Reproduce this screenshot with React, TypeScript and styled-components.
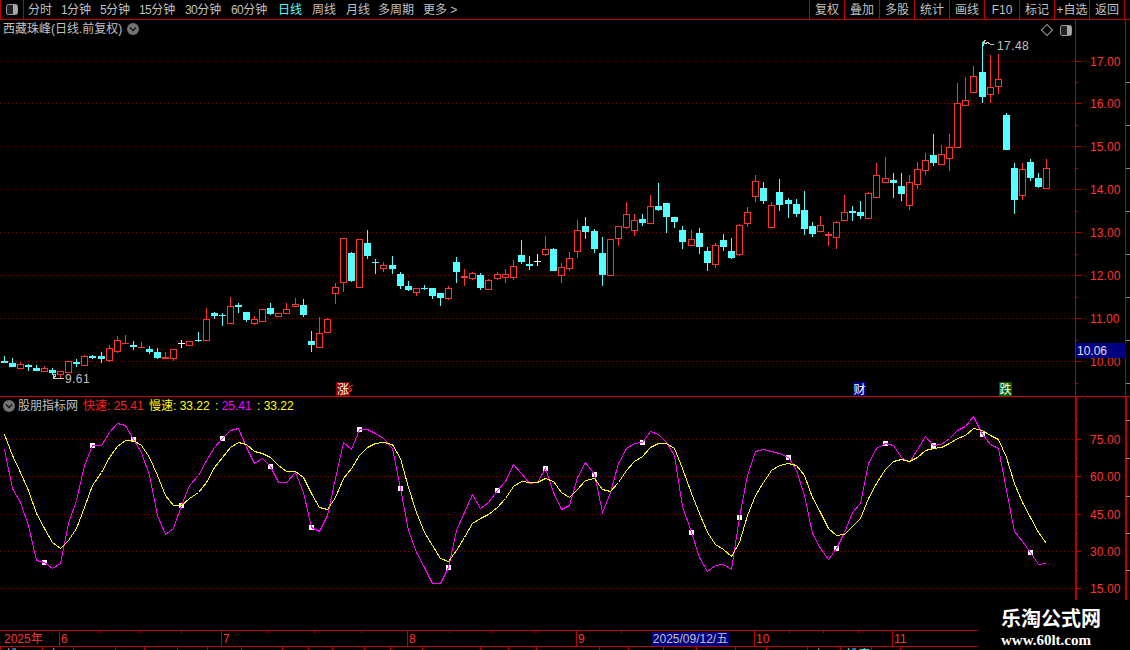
import React from 'react';
import styled, { createGlobalStyle } from 'styled-components';

const RED_LINE = '#c00000';
const RED_TEXT = '#ff3232';
const GRID = '#800000';
const CYAN = '#54ffff';
const GRAY = '#c0c0c0';
const FONT = '"Liberation Sans", "Noto Sans CJK SC", sans-serif';

const GlobalStyle = createGlobalStyle`
  html, body { margin: 0; padding: 0; background: #000; overflow: hidden; }
  #root { width: 1130px; height: 650px; }
`;

const Page = styled.div`
  position: relative;
  display: flex;
  flex-direction: column;
  width: 1130px;
  height: 650px;
  overflow: hidden;
  background: #000;
  color: ${GRAY};
  font: 12px/1 ${FONT};
`;

const Toolbar = styled.div`
  display: flex;
  align-items: stretch;
  flex: 0 0 20px;
  box-sizing: border-box;
  border-bottom: 1px solid ${RED_LINE};
`;

const ToggleCell = styled.div`
  flex: 0 0 24px;
  box-sizing: border-box;
  display: flex;
  align-items: center;
  justify-content: center;
  padding-right: 1px;
  border-left: 1px solid ${RED_LINE};
  border-right: 1px solid ${RED_LINE};
`;

const Tabs = styled.div`
  display: flex;
  align-items: center;
  padding-left: 4px;
`;

const Tab = styled.div<{ $w: number; $active?: boolean }>`
  width: ${(p) => p.$w}px;
  white-space: nowrap;
  color: ${(p) => (p.$active ? CYAN : GRAY)};
`;

const Num = styled.span`
  letter-spacing: -0.6px;
`;

const Tools = styled.div`
  display: flex;
  margin-left: auto;
  margin-right: 5px;
  border-left: 1px solid ${RED_LINE};
`;

const ToolButton = styled.div`
  width: 35px;
  box-sizing: border-box;
  display: flex;
  align-items: center;
  justify-content: center;
  white-space: nowrap;
  border-right: 1px solid ${RED_LINE};
`;

const Pane = styled.div<{ $h: number; $divider?: boolean }>`
  display: flex;
  flex: 0 0 ${(p) => p.$h}px;
  box-sizing: border-box;
  border-bottom: ${(p) => (p.$divider ? `1px solid #d00000` : 'none')};
`;

const Plot = styled.div`
  position: relative;
  flex: 0 0 1075px;
  svg { display: block; }
`;

const Axis = styled.div`
  flex: 0 0 55px;
  svg { display: block; }
`;

const PaneHeader = styled.div`
  position: absolute;
  top: 2px;
  left: 3px;
  display: flex;
  align-items: center;
  white-space: nowrap;
  height: 14px;
`;

const Title = styled.span`
  margin-right: 5px;
`;

const IndicatorTitle = styled.span`
  margin-left: 3px;
  margin-right: 5px;
`;

const Reading = styled.span<{ $color: string; $w: number }>`
  color: ${(p) => p.$color};
  width: ${(p) => p.$w}px;
`;

const Colon = styled.span`
  color: #ffff00;
`;

const PaneTools = styled.div`
  position: absolute;
  top: 4px;
  right: 3px;
  display: flex;
  align-items: center;
  gap: 7px;
`;

const TimeAxis = styled.div`
  display: flex;
  flex: 0 0 17px;
  box-sizing: border-box;
  position: relative;
  border-top: 1px solid ${RED_LINE};
  border-bottom: 1px solid ${RED_LINE};
  color: ${RED_TEXT};
`;

const TimeCell = styled.div<{ $w: number; $first?: boolean }>`
  flex: 0 0 ${(p) => p.$w}px;
  box-sizing: border-box;
  padding: 2px 0 0 ${(p) => (p.$first ? 4 : 1)}px;
  border-left: ${(p) => (p.$first ? 'none' : `1px solid ${RED_LINE}`)};
  white-space: nowrap;
`;

const TimeTicks = styled.svg`
  position: absolute;
  top: 0;
  left: 0;
`;

const DateChip = styled.div`
  position: absolute;
  top: 1px;
  left: 652px;
  width: 77px;
  height: 14px;
  background: #000080;
  color: ${GRAY};
  line-height: 14px;
  text-align: center;
  white-space: nowrap;
`;

const Status = styled.div`
  display: flex;
  flex: 0 0 3px;
  overflow: hidden;
  border-left: 1px solid ${RED_LINE};
`;

const StatusCell = styled.div<{ $w: number; $color?: string }>`
  flex: 0 0 ${(p) => p.$w}px;
  box-sizing: border-box;
  height: 16px;
  padding: 2px 0 0 5px;
  border-right: 1px solid ${RED_LINE};
  color: ${(p) => p.$color ?? GRAY};
  white-space: nowrap;
`;

const Watermark = styled.div`
  position: absolute;
  right: 0;
  bottom: 0;
  width: 152px;
  height: 50px;
  background: #000;
  box-sizing: border-box;
  padding: 7px 0 0 23px;
  color: #fff;
`;

const WatermarkName = styled.div`
  font: 700 20px/22px "Noto Sans CJK SC", sans-serif;
  white-space: nowrap;
`;

const WatermarkUrl = styled.div`
  margin-top: 4px;
  font: 700 15px/15px "Liberation Serif", serif;
  white-space: nowrap;
`;

/* ---------- data, in pixel rows of the picture ---------- */

type Kind = 'c' | 'r' | 'f' | 'w';
type Candle = [Kind, number, number, number, number];

const candles: Candle[] = [
  ['c',356,361,363,363],['c',358,363,367,367],['r',362,364,368,369],['c',364,365,367,371],['c',365,368,371,371],
  ['r',366,368,371,372],['c',368,370,373,375],['r',371,371,374,378],['r',361,361,372,372],['c',359,362,364,367],
  ['r',355,356,365,365],['c',355,356,358,359],['c',352,356,359,363],['r',345,348,360,362],['r',336,340,351,353],
  ['f',335,343,344,344],['c',341,345,347,350],['f',342,347,348,348],['c',346,349,352,354],['c',348,352,358,359],
  ['f',352,357,359,359],['r',349,349,358,361],['w',340,343,344,348],['r',341,341,345,346],['c',332,340,341,342],
  ['r',308,319,340,340],['c',312,313,316,319],['c',313,315,316,326],['r',297,306,323,323],['c',303,305,307,313],
  ['c',312,312,320,322],['r',316,319,323,325],['r',309,309,321,321],['c',303,308,314,315],['r',313,313,316,316],
  ['r',303,309,313,313],['r',298,304,306,306],['c',299,305,315,317],['c',331,341,345,352],['r',317,333,347,347],
  ['r',318,319,332,332],['r',283,287,293,304],['r',238,238,282,292],['c',252,253,281,282],['r',239,239,287,287],
  ['c',230,243,256,259],['c',259,262,263,274],['r',262,265,268,272],['c',256,265,269,274],['c',272,274,286,289],
  ['c',281,286,290,291],['r',288,288,292,296],['c',285,288,289,290],['c',288,288,296,299],['c',293,293,298,306],
  ['r',286,288,298,300],['c',257,262,272,283],['f',269,276,278,286],['r',272,273,278,280],['c',273,275,288,290],
  ['r',279,280,289,290],['r',272,274,278,280],['r',269,274,277,283],['r',260,266,277,280],['c',240,255,262,264],
  ['c',256,264,266,270],['w',254,261,262,266],['r',236,249,254,256],['c',248,249,271,271],['r',263,267,275,283],
  ['r',252,258,268,271],['r',220,230,251,258],['c',217,226,232,239],['c',229,231,249,253],['c',237,253,275,286],
  ['r',239,239,275,276],['r',226,226,238,246],['r',202,214,227,229],['r',214,220,230,236],['c',214,219,223,226],
  ['r',195,206,223,224],['c',183,206,210,211],['c',203,203,217,233],['c',217,217,222,228],['c',226,230,242,249],
  ['r',230,239,245,245],['c',228,233,247,254],['c',247,251,263,271],['r',243,245,264,268],['c',234,240,247,251],
  ['c',238,251,258,259],['r',224,225,254,256],['r',207,212,223,227],['r',175,181,196,202],['c',182,188,201,204],
  ['r',202,205,227,227],['c',179,192,205,211],['c',198,200,204,218],['c',199,204,214,217],['c',191,210,229,235],
  ['c',222,226,234,237],['r',216,225,231,232],['f',232,234,236,246],['r',221,222,237,249],['r',195,212,220,220],
  ['c',206,211,213,221],['c',201,212,216,219],['r',192,193,218,218],['r',163,175,197,198],['r',157,178,182,182],
  ['c',173,180,183,198],['c',173,186,194,201],['r',175,182,205,210],['r',162,169,184,189],['r',153,160,170,175],
  ['c',134,155,163,166],['r',145,154,164,165],['r',134,147,158,171],['r',83,103,147,147],['r',77,100,105,105],
  ['r',66,76,92,93],['c',42,72,97,103],['r',55,87,94,103],['r',54,79,86,94],['c',113,115,150,150],
  ['c',163,168,200,214],['r',163,169,195,200],['c',159,162,178,181],['c',173,178,187,188],['r',159,168,188,189],
];

const magenta = [
  449,488,502,525,560,562,568,563,523,500,465,445,445,432,423,425,439,452,475,515,534,528,505,485,475,460,447,438,430,428,
  447,463,458,466,482,482,472,492,527,531,515,478,442,449,429,429,433,438,448,488,530,552,567,583,583,567,530,512,494,508,
  502,490,481,464,473,483,482,468,492,509,505,477,462,474,512,492,463,448,443,442,431,434,442,455,506,532,557,571,565,564,
  569,517,475,451,449,451,453,457,470,495,533,548,559,548,532,512,503,463,448,443,445,457,462,449,436,445,444,438,430,426,
  416,434,444,448,490,531,541,552,564,563,
];

const yellow = [
  434,455,472,490,513,528,542,548,540,528,507,485,472,457,446,440,440,445,457,475,495,505,505,498,492,482,467,457,447,442,
  444,451,453,457,465,471,471,477,493,507,509,497,478,468,455,447,443,442,444,458,487,512,532,545,558,561,550,537,523,518,
  514,507,498,486,481,482,482,478,481,492,497,489,480,478,489,491,482,470,461,456,447,443,443,448,468,493,513,532,544,549,
  556,542,515,495,482,470,465,463,465,475,497,512,528,535,534,526,518,498,483,469,461,459,461,457,450,448,447,443,438,435,
  428,430,435,439,457,483,502,517,532,543,
];

const marks = [5,11,16,22,27,33,38,44,49,55,61,67,73,79,85,91,97,103,109,115,121,127];
const jumps = [12,24,36,48,61,73,85,97,109,121];
const colX = (i: number) => 4 + 8 * i + jumps.filter((j) => j <= i).length;

const priceGrid = [61,103,146,189,232,275,318,361];
const priceLabels: [string, number][] = [['17.00',61],['16.00',103],['15.00',146],['14.00',189],['13.00',232],['12.00',275],['11.00',318],['10.00',361]];
const priceMinor = [82,125,168,211,254,297,340,383];
const rateGrid = [439,476,514,551,588];
const rateLabels: [string, number][] = [['75.00',439],['60.00',476],['45.00',514],['30.00',551],['15.00',588]];
const rateMinor = [420,458,496,533,570];

const tabs: [string | null, string, number, boolean?][] = [
  [null,'分时',33],['1','分钟',39],['5','分钟',39],['15','分钟',46],['30','分钟',46],['60','分钟',47],
  [null,'日线',34,true],[null,'周线',34],[null,'月线',32],[null,'多周期',45],[null,'更多 >',40],
];
const tools = ['复权','叠加','多股','统计','画线','F10','标记','+自选','返回'];
const months: [string, number, boolean?][] = [['2025年',59,true],['6',162],['7',186],['8',169],['9',178],['10',138],['11',238]];
const timeTicks = [100,140,181,268,314,361,449,492,534,621,789,823,858];
const statusCells: [string, number, string?][] = [
  ['排',42],['上',31],['',42],['',29],['',33],['',30],['',34],['',41],['',26],['',24],['',32],['',26],['',32],['',58],['',28],['',28],
  ['',63],['',29],['',35],['',33],['',39],['',31],['',41],['上',33],['排序',31,CYAN],['',29],
];

/* ---------- drawings ---------- */

const PanelGlyph = () => (
  <svg width="12" height="11" viewBox="0 0 12 11">
    <rect x="0.5" y="0.5" width="11" height="10" rx="2" fill="#222" stroke="#9a9a9a" />
    <rect x="7" y="1" width="4" height="9" fill="#a8a8a8" />
  </svg>
);

const ChevronDisc = () => (
  <svg width="12" height="12" viewBox="0 0 12 12">
    <circle cx="6" cy="6" r="6" fill="#737373" />
    <path d="M3 4.5 L6 7.5 L9 4.5" fill="none" stroke="#161616" strokeWidth="1.4" />
  </svg>
);

const Diamond = () => (
  <svg width="12" height="12" viewBox="0 0 12 12" shapeRendering="crispEdges">
    <path d="M6 .5 L11.5 6 L6 11.5 L.5 6 Z" fill="none" stroke="#6e6e6e" />
  </svg>
);

const CandleMark = ({ c, i }: { c: Candle; i: number }) => {
  const [kind, high, top, bottom, low] = c;
  const x = colX(i);
  const color = kind === 'c' ? CYAN : kind === 'w' ? '#ffffff' : '#ff3232';
  const wick = (
    <>
      {top > high && <rect x={x} y={high} width="1" height={top - high} fill={color} />}
      {low > bottom && <rect x={x} y={bottom} width="1" height={low - bottom} fill={color} />}
    </>
  );
  if (kind === 'r') {
    return (
      <g>
        {wick}
        <rect x={x - 3 + 0.5} y={top + 0.5} width="6" height={bottom - top} fill="#000" stroke={color} />
      </g>
    );
  }
  return (
    <g>
      {wick}
      <rect x={x - 3} y={top} width="7" height={Math.max(1, bottom - top)} fill={color} />
    </g>
  );
};

const Grid = ({ rows }: { rows: number[] }) => (
  <g>
    {rows.map((y) => (
      <line key={y} x1="0" x2="1075" y1={y + 0.5} y2={y + 0.5} stroke={GRID} strokeDasharray="1 3" />
    ))}
  </g>
);

const PriceChart = () => (
  <svg width="1075" height="376" viewBox="0 20 1075 376" shapeRendering="crispEdges">
    <Grid rows={priceGrid} />
    {candles.map((c, i) => (
      <CandleMark key={i} c={c} i={i} />
    ))}
    <path d="M994 44 L990 44 L988 42.5 L985 43.5 L983 41.5 M983 41.5 L986 40.5 M983 41.5 L983 46" fill="none" stroke="#c8c8c8" />
    <text x="997" y="50" fill={GRAY} fontSize="12" letterSpacing="0.4" fontFamily={FONT} shapeRendering="auto">17.48</text>
    <path d="M64 378.5 L53 378.5 M53 378.5 L56 375.5 M53 378.5 L53 374 M53 374 L56 374" fill="none" stroke="#c8c8c8" />
    <text x="65" y="383" fill={GRAY} fontSize="12" letterSpacing="0.4" fontFamily={FONT}>9.61</text>
    <rect x="336" y="382" width="14" height="14" fill="#8a0000" />
    <text x="343" y="394" fill="#fff" fontSize="12" textAnchor="middle" fontFamily={FONT}>涨</text>
    <path d="M353 385 L349 387 L352 390 L348 393" fill="none" stroke="#ff2020" />
    <rect x="853" y="382" width="13" height="14" fill="#000090" />
    <text x="859.5" y="394" fill="#fff" fontSize="12" textAnchor="middle" fontFamily={FONT}>财</text>
    <rect x="999" y="382" width="13" height="14" fill="#006000" />
    <text x="1005.5" y="394" fill="#fff" fontSize="12" textAnchor="middle" fontFamily={FONT}>跌</text>
  </svg>
);

const seriesPoints = (values: number[]) => values.map((y, i) => `${colX(i) + 0.5},${y + 0.5}`).join(' ');

const RateChart = () => (
  <svg width="1075" height="233" viewBox="0 397 1075 233" shapeRendering="crispEdges">
    <Grid rows={rateGrid} />
    {marks.map((i) => (
      <rect key={i} x={colX(i) - 2} y={magenta[i] - 2} width="5" height="5" fill="#fff" />
    ))}
    <polyline points={seriesPoints(magenta)} fill="none" stroke="#ff00ff" />
    <polyline points={seriesPoints(yellow)} fill="none" stroke="#ffff00" />
  </svg>
);

const AxisScale = ({
  top,
  height,
  labels,
  minor,
  width,
  children,
}: {
  top: number;
  height: number;
  labels: [string, number][];
  minor: number[];
  width: number;
  children?: React.ReactNode;
}) => (
  <svg width="55" height={height} viewBox={`1075 ${top} 55 ${height}`} shapeRendering="crispEdges">
    <rect x="1075" y={top} width={width} height={height} fill={RED_LINE} />
    <rect x="1125" y={top} width={width} height={Math.min(height, 600 - top)} fill={RED_LINE} />
    {labels.map(([t, y]) => (
      <g key={t}>
        <rect x="1075" y={y} width="6" height="1" fill={RED_LINE} />
        <text x="1090" y={y + 5} fill={RED_TEXT} fontSize="12" fontFamily={FONT} letterSpacing="0.1">{t}</text>
      </g>
    ))}
    {minor.map((y) => (
      <g key={y}>
        <rect x="1075" y={y} width="3" height="1" fill={RED_LINE} />
        <rect x="1126" y={y} width="4" height="1" fill="#8a8a8a" />
      </g>
    ))}
    {children}
  </svg>
);

export default function App() {
  return (
    <Page>
      <GlobalStyle />
      <Toolbar>
        <ToggleCell>
          <PanelGlyph />
        </ToggleCell>
        <Tabs>
          {tabs.map(([n, t, w, active]) => (
            <Tab key={`${n}${t}`} $w={w} $active={active}>
              {n && <Num>{n}</Num>}
              {t}
            </Tab>
          ))}
        </Tabs>
        <Tools>
          {tools.map((t) => (
            <ToolButton key={t}>{t}</ToolButton>
          ))}
        </Tools>
      </Toolbar>

      <Pane $h={377} $divider>
        <Plot>
          <PriceChart />
          <PaneHeader>
            <Title>西藏珠峰(日线.前复权)</Title>
            <ChevronDisc />
          </PaneHeader>
          <PaneTools>
            <Diamond />
            <PanelGlyph />
          </PaneTools>
        </Plot>
        <Axis>
          <AxisScale top={20} height={376} labels={priceLabels} minor={priceMinor} width={1}>
            <rect x="1076" y="343" width="50" height="15" fill="#000080" />
            <text x="1077" y="355" fill="#e0e0e0" fontSize="12" fontFamily={FONT}>10.06</text>
          </AxisScale>
        </Axis>
      </Pane>

      <Pane $h={233}>
        <Plot>
          <RateChart />
          <PaneHeader>
            <ChevronDisc />
            <IndicatorTitle>股朋指标网</IndicatorTitle>
            <Reading $color="#ff2020" $w={66}>快速: 25.41</Reading>
            <Reading $color="#ffff00" $w={66}>慢速: 33.22</Reading>
            <Reading $color="#ff00ff" $w={42}><Colon>: </Colon>25.41</Reading>
            <Reading $color="#ffff00" $w={40}>: 33.22</Reading>
          </PaneHeader>
        </Plot>
        <Axis>
          <AxisScale top={397} height={233} labels={rateLabels} minor={rateMinor} width={2} />
        </Axis>
      </Pane>

      <TimeAxis>
        {months.map(([t, w, first]) => (
          <TimeCell key={t} $w={w} $first={first}>
            {t}
          </TimeCell>
        ))}
        <TimeTicks width="1130" height="4">
          {timeTicks.map((x) => (
            <rect key={x} x={x} y="0" width="1" height="2" fill={RED_LINE} />
          ))}
        </TimeTicks>
        <DateChip>2025/09/12/五</DateChip>
      </TimeAxis>

      <Status>
        {statusCells.map(([t, w, color], i) => (
          <StatusCell key={i} $w={w} $color={color}>
            {t}
          </StatusCell>
        ))}
      </Status>

      <Watermark>
        <WatermarkName>乐淘公式网</WatermarkName>
        <WatermarkUrl>www.60lt.com</WatermarkUrl>
      </Watermark>
    </Page>
  );
}
